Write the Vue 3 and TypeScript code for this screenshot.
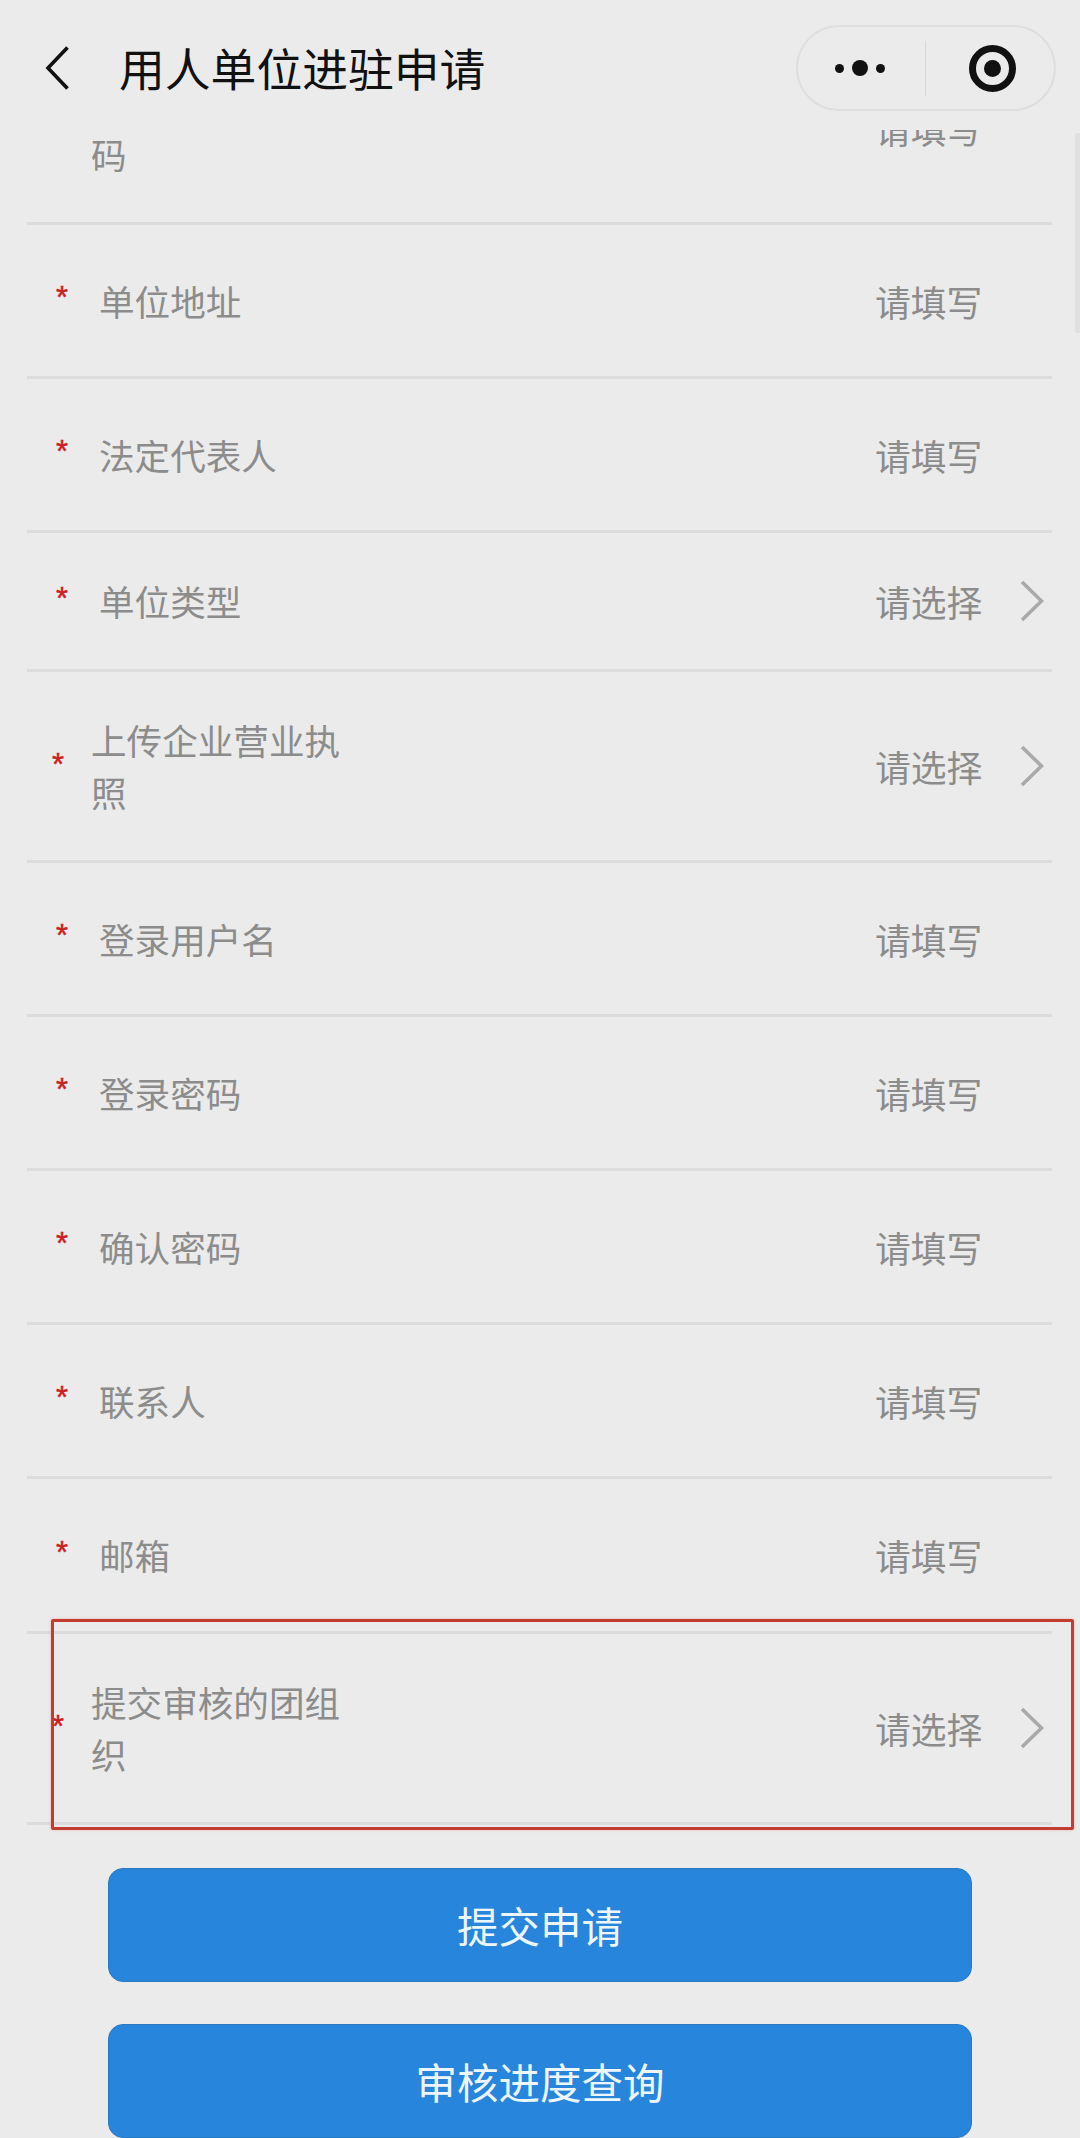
<script setup lang="ts">
interface Row {
  label: string;
  hint: string;
  tall?: boolean;
  arrow?: boolean;
  short?: boolean;
}

const rows: Row[] = [
  { label: "统一社会信用代码", hint: "请填写", tall: true },
  { label: "单位地址", hint: "请填写" },
  { label: "法定代表人", hint: "请填写" },
  { label: "单位类型", hint: "请选择", arrow: true, short: true },
  { label: "上传企业营业执照", hint: "请选择", arrow: true, tall: true },
  { label: "登录用户名", hint: "请填写" },
  { label: "登录密码", hint: "请填写" },
  { label: "确认密码", hint: "请填写" },
  { label: "联系人", hint: "请填写" },
  { label: "邮箱", hint: "请填写" },
  { label: "提交审核的团组织", hint: "请选择", arrow: true, tall: true },
];
</script>

<template>
  <div class="page">
    <header class="nav">
      <svg class="back" viewBox="0 0 24 44" fill="none">
        <path d="M22.5 1.5 3 22l19.5 20.5" stroke="#111" stroke-width="3.6" />
      </svg>
      <h1 class="title">用人单位进驻申请</h1>
      <div class="capsule">
        <div class="dots">
          <i class="dot"></i>
          <i class="dot big"></i>
          <i class="dot"></i>
        </div>
        <span class="split"></span>
        <div class="target"><i></i></div>
      </div>
    </header>

    <main class="viewport">
      <div class="scrolled">
        <div class="form">
          <div
            v-for="row in rows"
            :key="row.label"
            class="row"
            :class="{ tall: row.tall, short: row.short }"
          >
            <span class="star">*</span>
            <span class="label">{{ row.label }}</span>
            <span class="hint">{{ row.hint }}</span>
            <span class="tail">
              <svg v-if="row.arrow" class="arrow" viewBox="0 0 24 42" fill="none">
                <path d="M2 2 21.5 21 2 40" stroke="#a9a9a9" stroke-width="3.6" />
              </svg>
            </span>
          </div>
          <div class="highlight"></div>
        </div>
        <div class="actions">
          <button class="btn" type="button">提交申请</button>
          <button class="btn" type="button">审核进度查询</button>
        </div>
      </div>
      <div class="scrollbar"></div>
    </main>
  </div>
</template>

<style>
html,
body {
  margin: 0;
  background: #ebebeb;
}
</style>

<style scoped>
.page {
  width: 1080px;
  height: 2138px;
  overflow: hidden;
  background: #ebebeb;
  font-family: "Noto Sans CJK SC", "Noto Sans", sans-serif;
}

.nav {
  height: 130px;
  display: flex;
  align-items: center;
  padding: 6px 24px 0 45px;
  box-sizing: border-box;
}

.back {
  width: 24px;
  height: 44px;
  flex: none;
}

.title {
  margin: -2px 0 0 50px;
  font-size: 45.8px;
  font-weight: 400;
  line-height: 60px;
  color: #111;
  flex: 1;
}

.capsule {
  width: 260px;
  height: 86px;
  flex: none;
  box-sizing: border-box;
  border: 2px solid #dedede;
  border-radius: 43px;
  display: flex;
  align-items: center;
}

.dots {
  width: 127px;
  box-sizing: border-box;
  padding-right: 3px;
  display: flex;
  align-items: center;
  justify-content: center;
  gap: 8px;
}

.dot {
  width: 9px;
  height: 9px;
  border-radius: 50%;
  background: #111;
}

.dot.big {
  width: 16px;
  height: 16px;
}

.split {
  width: 1px;
  height: 55px;
  background: #d9d9d9;
}

.target {
  position: relative;
  flex: 1;
  display: flex;
  align-items: center;
  justify-content: center;
  height: 100%;
  padding-left: 5px;
}

.target::before {
  content: "";
  width: 47px;
  height: 47px;
  box-sizing: border-box;
  border: 7px solid #111;
  border-radius: 50%;
}

.target i {
  position: absolute;
  left: calc(50% + 2.5px);
  top: 50%;
  width: 17px;
  height: 17px;
  margin: -8.5px 0 0 -8.5px;
  border-radius: 50%;
  background: #111;
}

.viewport {
  position: relative;
  height: 2008px;
  overflow: hidden;
}

.scrolled {
  margin-top: -96px;
}

.scrollbar {
  position: absolute;
  right: 0;
  top: 3px;
  width: 5px;
  height: 200px;
  border-radius: 3px 0 0 3px;
  background: #e0e0e0;
}

.form {
  position: relative;
  margin: 0 28px 0 27px;
}

.row {
  height: 154px;
  box-sizing: border-box;
  display: flex;
  align-items: center;
  border-bottom: 3px solid #dcdcdc;
  padding-left: 29px;
  color: #8c8c8c;
  font-size: 35px;
}

.row:nth-child(10) {
  height: 155px;
}

.row.short {
  height: 139px;
}

.row.tall {
  height: 191px;
  padding-left: 25px;
}

.star {
  width: 43px;
  flex: none;
  margin-top: -6px;
  color: #c9211e;
  font-size: 31px;
  font-weight: 400;
  -webkit-text-stroke: 0.5px #c9211e;
  line-height: 1;
  font-family: "Liberation Sans", sans-serif;
}

.tall .star {
  width: 39px;
  margin-top: -3px;
}

.label {
  width: 252px;
  font-size: 35.6px;
  line-height: 52px;
}

.hint {
  margin-left: auto;
  font-size: 35.8px;
  line-height: 48px;
  width: 108px;
}

.tail {
  width: 69px;
  flex: none;
  height: 42px;
  display: flex;
  justify-content: flex-end;
  padding-right: 8px;
  box-sizing: border-box;
}

.arrow {
  width: 24px;
  height: 42px;
}

.highlight {
  position: absolute;
  left: 24px;
  right: -22px;
  bottom: -5px;
  height: 211px;
  box-sizing: border-box;
  border: 3px solid #c23c31;
  border-radius: 2px;
  box-shadow: 0 0 3px rgba(240, 110, 100, 0.45);
  pointer-events: none;
}

.actions {
  display: flex;
  flex-direction: column;
  gap: 42px;
  padding: 43px 108px 0;
}

.btn {
  height: 114px;
  flex: none;
  border: 1px solid #2a78c2;
  border-radius: 15px;
  background: #2785dc;
  color: #eef6fd;
  font: inherit;
  font-size: 41.5px;
  padding: 0;
}
</style>
